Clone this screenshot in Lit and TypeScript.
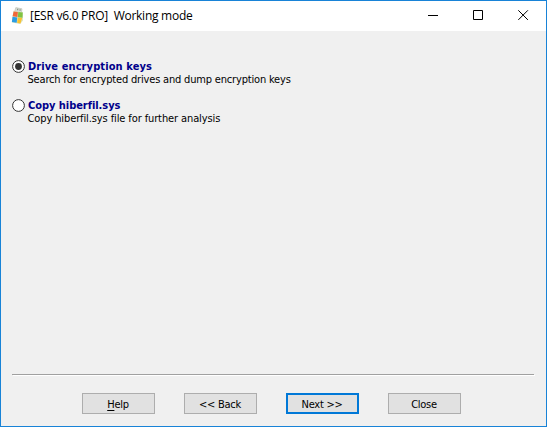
import { LitElement, html, css, svg } from "lit";
import { customElement, state } from "lit/decorators.js";
import { classMap } from "lit/directives/class-map.js";

const MODES = [
  { key: "keys", title: "Drive encryption keys", text: "Search for encrypted drives and dump encryption keys" },
  { key: "hiber", title: "Copy hiberfil.sys", text: "Copy hiberfil.sys file for further analysis" },
];

@customElement("app-root")
export class AppRoot extends LitElement {
  @state() private mode = "keys";

  static styles = css`
    :host {
      display: flex;
      flex-direction: column;
      box-sizing: border-box;
      width: 547px;
      height: 427px;
      border: 1px solid #1883d7;
      background: #f0f0f0;
      color: #000;
      font: 11px/13px "DejaVu Sans Condensed", "DejaVu Sans", sans-serif;
      font-stretch: condensed;
      overflow: hidden;
      user-select: none;
    }
    .bar {
      display: flex;
      height: 30px;
      background: #fff;
      flex: none;
    }
    .logo { width: 16px; height: 18px; margin: 6px 5px 0 8px; flex: none; }
    .caption {
      flex: 1;
      font: 12px/30px "Open Sans", "Noto Sans", sans-serif;
      letter-spacing: -0.26px;
      white-space: pre;
    }
    .controls { display: flex; }
    .controls svg { width: 45px; height: 30px; display: block; }
    .modes {
      flex: 1;
      display: flex;
      flex-direction: column;
      gap: 13px;
      padding: 29px 11px 0;
    }
    .mode { display: grid; grid-template-columns: 13px 1fr; column-gap: 3px; height: 26px; }
    .mode svg { width: 13px; height: 13px; display: block; }
    .title { font-weight: bold; color: #00008b; white-space: nowrap; letter-spacing: 0.1px; }
    .text { grid-column: 2; white-space: nowrap; letter-spacing: -0.18px; margin-left: -0.5px; }
    .hiber .title { letter-spacing: -0.05px; }
    .hiber .text { letter-spacing: -0.11px; }
    .rule { height: 1px; margin: 0 12px 0 11px; background: #a0a0a0; box-shadow: 1px 1px #fff; flex: none; }
    .buttons { display: flex; gap: 29px; padding: 18px 0 12px 81px; flex: none; }
    .btn {
      box-sizing: border-box;
      width: 73px;
      height: 21px;
      padding: 2px 1px 0 0;
      border: 1px solid #adadad;
      background: #e1e1e1;
      font: inherit;
      color: #000;
      letter-spacing: -0.25px;
    }
    .btn.primary { border: 2px solid #0078d7; }
    .key { text-decoration: underline; text-underline-offset: 2px; text-decoration-skip-ink: none; }
  `;

  render() {
    return html`
      <div class="bar">
        <svg class="logo" viewBox="0 0 16 18">
          <path d="M6.8 .6 13 1.8 12.4 5.6 5.6 4.6Z" fill="#d9ddd5" stroke="#b9beb2" stroke-width=".6" />
          <path d="M8 1.8h1.3v1.5H8zM10.5 2.3h1.2v1.4h-1.2z" fill="#8f9889" />
          <path d="M4.4 3.8 14 5 14 13.6 11.2 17 2.8 15.6Z" fill="#dbe5c8" />
          <path d="M4.6 4.4 8.9 5 8.4 10 3.6 9.3Z" fill="#f0693a" />
          <path d="M9.3 5 13.7 5.6 13.5 10.8 8.8 10.2Z" fill="#80c342" />
          <path d="M3.5 9.8 8.2 10.4 7.7 15.8 2.9 15Z" fill="#2b9de3" />
          <path d="M8.7 10.5 13.2 11 11.5 16.4 8.2 15.9Z" fill="#fbc22f" />
        </svg>
        <div class="caption">[ESR v6.0 PRO]  Working mode</div>
        <div class="controls">
          <svg viewBox="0 0 45 30"><path d="M17 14.5h10" stroke="#000" /></svg>
          <svg viewBox="0 0 45 30"><path d="M17.5 9.5h9v9h-9z" fill="none" stroke="#000" /></svg>
          <svg viewBox="0 0 45 30"><path d="M17.3 9.3l9.6 9.6M26.9 9.3l-9.6 9.6" stroke="#000" /></svg>
        </div>
      </div>
      <div class="modes" role="radiogroup">
        ${MODES.map(
          (m) => html`
            <div class=${classMap({ mode: true, [m.key]: true })} role="radio" aria-checked=${this.mode === m.key} @click=${() => (this.mode = m.key)}>
              <svg viewBox="0 0 13 13">
                <circle cx="6.5" cy="6.5" r="5.9" fill="#fff" stroke="#333" stroke-width="1" />
                ${this.mode === m.key ? svg`<circle cx="6.5" cy="6.5" r="3.4" fill="#333" />` : ""}
              </svg>
              <div class="title">${m.title}</div>
              <div class="text">${m.text}</div>
            </div>
          `
        )}
      </div>
      <div class="rule"></div>
      <div class="buttons">
        <button class="btn"><span class="key">H</span>elp</button>
        <button class="btn">&lt;&lt; Back</button>
        <button class=${classMap({ btn: true, primary: true })}>Next &gt;&gt;</button>
        <button class="btn">Close</button>
      </div>
    `;
  }
}
